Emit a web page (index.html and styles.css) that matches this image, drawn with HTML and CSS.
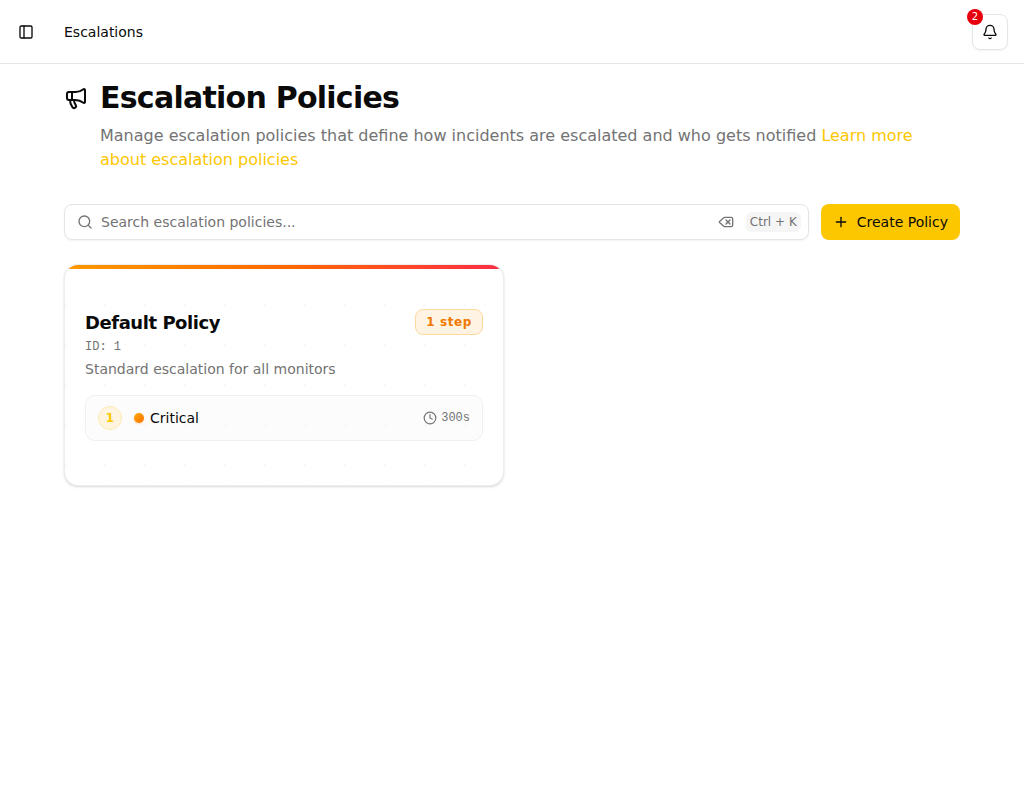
FILE: index.html
```html
<!DOCTYPE html>
<html lang="en">
<head>
<meta charset="utf-8">
<meta name="viewport" content="width=device-width, initial-scale=1">
<title>Escalation Policies</title>
<link rel="stylesheet" href="styles.css">
</head>
<body>
<header class="topbar">
  <button class="icon-button" type="button" aria-label="Toggle sidebar">
    <svg class="icon" viewBox="0 0 24 24"><rect width="18" height="18" x="3" y="3" rx="2"/><path d="M9 3v18"/></svg>
  </button>
  <nav class="breadcrumb" aria-label="Breadcrumb">Escalations</nav>
  <button class="bell-button" type="button" aria-label="Notifications">
    <svg class="icon" viewBox="0 0 24 24"><path d="M10.268 21a2 2 0 0 0 3.464 0"/><path d="M3.262 15.326A1 1 0 0 0 4 17h16a1 1 0 0 0 .74-1.673C19.41 13.956 18 12.499 18 8A6 6 0 0 0 6 8c0 4.499-1.411 5.956-2.738 7.326"/></svg>
    <span class="bell-count">2</span>
  </button>
</header>
<main class="page">
  <section class="intro">
    <svg class="icon intro-icon" viewBox="0 0 24 24"><path d="M11 6a13 13 0 0 0 8.4-2.8A1 1 0 0 1 21 4v12a1 1 0 0 1-1.6.8A13 13 0 0 0 11 14H5a2 2 0 0 1-2-2V8a2 2 0 0 1 2-2z"/><path d="M6 14a12 12 0 0 0 2.4 7.2 2 2 0 0 0 3.2-2.4A8 8 0 0 1 10 14"/><path d="M8 6v8"/></svg>
    <h1 class="title">Escalation Policies</h1>
    <p class="lead">Manage escalation policies that define how incidents are escalated and who gets notified <a class="link" href="#">Learn more about escalation policies</a></p>
  </section>
  <div class="toolbar">
    <label class="search">
      <svg class="icon muted" viewBox="0 0 24 24"><path d="m21 21-4.34-4.34"/><circle cx="11" cy="11" r="8"/></svg>
      <input class="search-input" type="text" aria-label="Search escalation policies" placeholder="Search escalation policies...">
      <button class="clear-button" type="button" aria-label="Clear search">
        <svg class="icon muted" viewBox="0 0 24 24"><path d="M10 5a2 2 0 0 0-1.344.519l-6.328 5.74a1 1 0 0 0 0 1.481l6.328 5.741A2 2 0 0 0 10 19h10a2 2 0 0 0 2-2V7a2 2 0 0 0-2-2z"/><path d="m12 9 6 6"/><path d="m18 9-6 6"/></svg>
      </button>
      <kbd class="shortcut">Ctrl + K</kbd>
    </label>
    <button class="create-button" type="button">
      <svg class="icon" viewBox="0 0 24 24"><path d="M5 12h14"/><path d="M12 5v14"/></svg>
      Create Policy
    </button>
  </div>
  <div class="cards">
    <article class="card">
      <div class="card-head">
        <h2 class="card-title">Default Policy</h2>
        <span class="badge">1 step</span>
      </div>
      <p class="card-id">ID: 1</p>
      <p class="card-text">Standard escalation for all monitors</p>
      <div class="step">
        <span class="step-number">1</span>
        <span class="step-dot"></span>
        <span class="step-name">Critical</span>
        <span class="step-time">
          <svg class="icon icon-small" viewBox="0 0 24 24"><circle cx="12" cy="12" r="10"/><path d="M12 6v6l4 2"/></svg>
          300s
        </span>
      </div>
    </article>
  </div>
</main>
</body>
</html>
```
FILE: styles.css
```css
* { box-sizing: border-box; }
body, h1, h2, p { margin: 0; }
body {
  background: #fff;
  color: #0a0a0a;
  font: 14px/20px "DejaVu Sans", sans-serif;
}
button {
  padding: 0;
  border: 0;
  background: none;
  color: inherit;
  font: inherit;
}
.icon {
  width: 16px;
  height: 16px;
  flex: none;
  fill: none;
  stroke: currentColor;
  stroke-width: 2;
  stroke-linecap: round;
  stroke-linejoin: round;
}
.muted { color: #737373; }
.topbar {
  display: flex;
  align-items: center;
  height: 64px;
  padding: 0 16px 0 12px;
  border-bottom: 1px solid #e5e5e5;
}
.icon-button {
  display: grid;
  place-items: center;
  width: 28px;
  height: 28px;
}
.breadcrumb { flex: 1; margin-left: 24px; }
.bell-button {
  position: relative;
  display: grid;
  place-items: center;
  width: 36px;
  height: 36px;
  border: 1px solid #e5e5e5;
  border-radius: 8px;
  box-shadow: 0 1px 2px rgba(0, 0, 0, 0.05);
}
.bell-count {
  position: absolute;
  top: -6px;
  left: -6px;
  width: 16px;
  height: 16px;
  border-radius: 50%;
  background: #e7000b;
  color: #fff;
  font-size: 10px;
  line-height: 15px;
  text-align: center;
}
.page { padding: 16px 64px; }
.intro {
  display: grid;
  grid-template-columns: 24px 1fr;
  column-gap: 12px;
  row-gap: 8px;
  align-items: center;
}
.intro-icon { width: 24px; height: 24px; }
.title {
  font-size: 30px;
  font-weight: 700;
  line-height: 36px;
  letter-spacing: -0.025em;
}
.lead {
  grid-column: 2;
  color: #737373;
  font-size: 16px;
  line-height: 24px;
}
.link { color: #fdc700; text-decoration: none; }
.toolbar { display: flex; gap: 12px; margin-top: 32px; }
.search {
  display: flex;
  flex: 1;
  align-items: center;
  height: 36px;
  padding: 0 7px 0 12px;
  border: 1px solid #e5e5e5;
  border-radius: 8px;
  box-shadow: 0 1px 2px rgba(0, 0, 0, 0.05);
}
.search-input {
  flex: 1;
  min-width: 0;
  height: 32px;
  padding: 0 8px;
  border: 0;
  outline: 0;
  background: none;
  color: inherit;
  font: inherit;
}
.search-input::placeholder { color: #737373; opacity: 1; }
.clear-button { display: grid; margin-right: 12px; }
.shortcut {
  padding: 2px 4px;
  border-radius: 6px;
  background: #f5f5f5;
  color: #737373;
  font: 12px/16px "DejaVu Sans", sans-serif;
}
.create-button {
  display: flex;
  align-items: center;
  gap: 8px;
  height: 36px;
  padding: 0 12px;
  border-radius: 8px;
  background: #fdc700;
}
.cards {
  display: grid;
  grid-template-columns: 1fr 1fr;
  gap: 16px;
  margin-top: 24px;
}
.card {
  position: relative;
  overflow: hidden;
  padding: 44px 20px;
  border: 1px solid #eee;
  border-radius: 14px;
  background:
    radial-gradient(circle at 2px 2px, #f9f9f9 2px, transparent 2px) 38px 38px / 40px 40px,
    radial-gradient(circle at 1px 1px, #fbfbfb 1px, transparent 1px) 19px 39px / 40px 40px,
    radial-gradient(circle at 1px 1px, #fbfbfb 1px, transparent 1px) 0 19px / 40px 40px,
    #fff;
  box-shadow: 0 1px 3px rgba(0, 0, 0, 0.1), 0 1px 2px rgba(0, 0, 0, 0.06);
}
.card::before {
  content: "";
  position: absolute;
  inset: 0 0 auto;
  height: 4px;
  background: linear-gradient(90deg, #ff9900, #ff6900 50%, #fb2c46);
}
.card-head {
  display: flex;
  align-items: flex-start;
  justify-content: space-between;
}
.card-title {
  font-size: 18px;
  font-weight: 700;
  line-height: 28px;
  letter-spacing: -0.025em;
}
.badge {
  padding: 4px 10px;
  border: 1px solid #fdd9a0;
  border-radius: 8px;
  background: #fff4e3;
  color: #f07800;
  font-size: 12px;
  font-weight: 700;
  line-height: 16px;
  letter-spacing: 0.05em;
}
.card-id {
  margin-top: 2px;
  color: #737373;
  font: 12px/16px "Liberation Mono", monospace;
}
.card-text { margin-top: 4px; color: #737373; }
.step {
  display: flex;
  align-items: center;
  margin-top: 16px;
  padding: 10px 12px;
  border: 1px solid #f0f0f0;
  border-radius: 10px;
  background: rgba(245, 245, 245, 0.3);
}
.step-number {
  width: 24px;
  height: 24px;
  border: 1px solid #feebb0;
  border-radius: 50%;
  background: #fef4e0;
  color: #fdc700;
  font-size: 12px;
  font-weight: 700;
  line-height: 22px;
  text-align: center;
}
.step-dot {
  width: 10px;
  height: 10px;
  margin: 0 6px 0 12px;
  border-radius: 50%;
  background: linear-gradient(135deg, #ffa800, #ff7000);
  box-shadow: 0 1px 2px rgba(255, 120, 0, 0.3);
}
.step-name { flex: 1; }
.step-time {
  display: flex;
  align-items: center;
  gap: 4px;
  color: #737373;
  font: 12px/16px "Liberation Mono", monospace;
}
.icon-small { width: 14px; height: 14px; }
```
